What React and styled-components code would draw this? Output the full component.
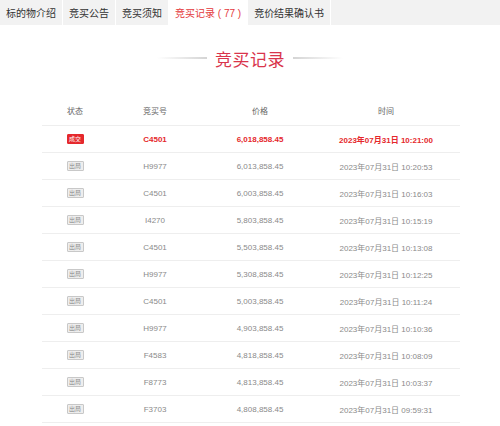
import React from 'react';
import styled, { createGlobalStyle } from 'styled-components';

const GlobalStyle = createGlobalStyle`
  body {
    margin: 0;
    background: #fff;
    font-family: "Liberation Sans", "Noto Sans CJK SC", sans-serif;
  }
`;

const TabBar = styled.div`
  display: flex;
  height: 25px;
  background: #f2f2f2;
`;

const Tab = styled.div`
  display: flex;
  align-items: center;
  padding: 0 6px;
  font-size: 10px;
  color: ${p => (p.active ? '#e4393c' : '#333')};
  background: ${p => (p.active ? '#fff' : 'transparent')};
  border-right: 1px solid #fff;
  white-space: pre;
`;

const TitleWrap = styled.div`
  display: flex;
  align-items: center;
  justify-content: center;
  gap: 8px;
  height: 66px;
  margin-bottom: 4px;
`;

const Line = styled.div`
  width: 50px;
  height: 2px;
  background: linear-gradient(
    to ${p => (p.right ? 'left' : 'right')},
    rgba(220, 220, 220, 0),
    #d4d4d4
  );
`;

const Title = styled.div`
  font-size: 17px;
  color: #d9354c;
  letter-spacing: 0.5px;
`;

const Table = styled.div`
  margin-left: 42px;
  width: 418px;
`;

const Row = styled.div`
  display: grid;
  grid-template-columns: 66px 94px 116px 1fr;
  align-items: center;
  height: ${p => (p.head ? '30px' : '26px')};
  border-bottom: 1px solid #eeeeee;
  font-size: 8px;
  color: ${p => (p.head ? '#666' : p.win ? '#e5282c' : '#8a8a8a')};
  font-weight: ${p => (p.win ? 'bold' : 'normal')};
`;

const Cell = styled.div`
  text-align: center;
  padding-right: ${p => (p.last ? '6px' : '0')};
`;

const Badge = styled.span`
  display: inline-flex;
  align-items: center;
  justify-content: center;
  width: 15px;
  height: 8px;
  font-size: 6px;
  line-height: 1;
  font-weight: normal;
  color: ${p => (p.win ? '#fff' : '#888')};
  background: ${p => (p.win ? '#e5282c' : '#eeeeee')};
  border: 1px solid ${p => (p.win ? '#e5282c' : '#c8c8c8')};
  border-radius: 1px;
`;

const tabs = ['标的物介绍', '竞买公告', '竞买须知', '竞买记录 ( 77 )', '竞价结果确认书'];

const records = [
  ['C4501', '6,018,858.45', '10:21:00'],
  ['H9977', '6,013,858.45', '10:20:53'],
  ['C4501', '6,003,858.45', '10:16:03'],
  ['I4270', '5,803,858.45', '10:15:19'],
  ['C4501', '5,503,858.45', '10:13:08'],
  ['H9977', '5,308,858.45', '10:12:25'],
  ['C4501', '5,003,858.45', '10:11:24'],
  ['H9977', '4,903,858.45', '10:10:36'],
  ['F4583', '4,818,858.45', '10:08:09'],
  ['F8773', '4,813,858.45', '10:03:37'],
  ['F3703', '4,808,858.45', '09:59:31'],
];

export default function App() {
  return (
    <>
      <GlobalStyle />
      <TabBar>
        {tabs.map((t, i) => (
          <Tab key={t} active={i === 3}>{t}</Tab>
        ))}
      </TabBar>
      <TitleWrap>
        <Line />
        <Title>竞买记录</Title>
        <Line right />
      </TitleWrap>
      <Table>
        <Row head>
          <Cell>状态</Cell>
          <Cell>竞买号</Cell>
          <Cell>价格</Cell>
          <Cell last>时间</Cell>
        </Row>
        {records.map(([no, price, time], i) => (
          <Row key={i} win={i === 0}>
            <Cell>
              <Badge win={i === 0}>{i === 0 ? '成交' : '出局'}</Badge>
            </Cell>
            <Cell>{no}</Cell>
            <Cell>{price}</Cell>
            <Cell last>2023年07月31日 {time}</Cell>
          </Row>
        ))}
      </Table>
    </>
  );
}
